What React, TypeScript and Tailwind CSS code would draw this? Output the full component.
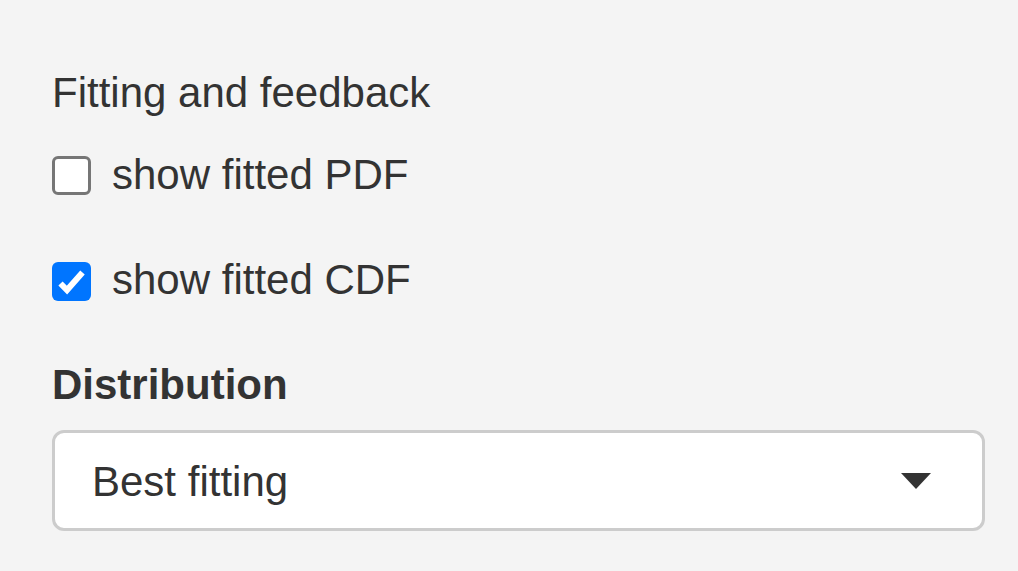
export default function App() {
  return (
    <div
      className="min-h-[571px] w-full bg-[#f4f4f4] text-[#333] pl-[52px] pt-[63px]"
      style={{ fontFamily: '"Liberation Sans", Arial, sans-serif' }}
    >
      <div className="text-[42px] leading-[60px]">Fitting and feedback</div>

      <div className="mt-[20px] flex items-start h-[60px]">
        <div className="mt-[13px] w-[39px] h-[39px] rounded-[6px] border-[3px] border-[#767676] bg-white" />
        <span className="ml-[21px] text-[42px] leading-[60px] mt-[2px]">show fitted PDF</span>
      </div>

      <div className="mt-[44px] flex items-start h-[60px]">
        <div className="mt-[15px] w-[39px] h-[39px] rounded-[6px] bg-[#0075ff] flex items-center justify-center">
          <svg width="30" height="30" viewBox="0 0 30 30">
            <path d="M3.5 16.5 L10 23 L25.5 5.5" fill="none" stroke="white" strokeWidth="6" strokeLinecap="butt" strokeLinejoin="miter" />
          </svg>
        </div>
        <span className="ml-[21px] text-[42px] leading-[60px] mt-[3px]">show fitted CDF</span>
      </div>

      <div className="mt-[48px] text-[42px] leading-[60px] font-bold">Distribution</div>

      <div className="mt-[15px] w-[933px] h-[101px] rounded-[12px] border-[3px] border-[#cccccc] bg-white flex items-center justify-between pl-[37px] pr-[51px]">
        <span className="text-[42px] leading-[60px] pt-[2px]">Best fitting</span>
        <svg width="30" height="16" viewBox="0 0 30 16">
          <path d="M0 0 L30 0 L15 16 Z" fill="#333" />
        </svg>
      </div>
    </div>
  );
}
